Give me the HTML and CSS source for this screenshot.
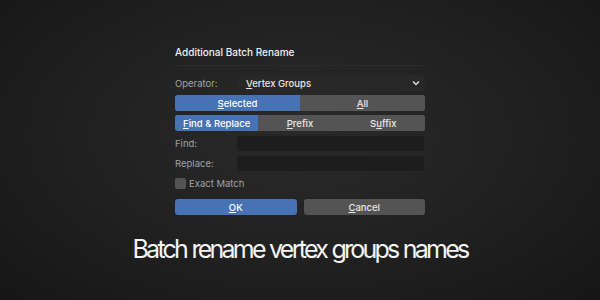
FILE: index.html
```html
<!DOCTYPE html>
<html>
<head>
  <meta charset="utf-8">
  <link rel="stylesheet" href="styles.css">
</head>
<body>
  <div class="page">
    <div class="dialog">
      <div class="title">Additional Batch Rename</div>
      <div class="separator"></div>

      <div class="rows">
        <div class="row">
          <div class="label">Operator:</div>
          <div class="dropdown">
            <span><u>V</u>ertex Groups</span>
            <svg class="chevron" width="8" height="6" viewBox="0 0 8 6">
              <path d="M1 1.5 L4 4.5 L7 1.5" fill="none" stroke="#e0e0e0" stroke-width="1.4"/>
            </svg>
          </div>
        </div>

        <div class="segmented">
          <div class="seg active"><u>S</u>elected</div>
          <div class="seg"><u>A</u>ll</div>
        </div>

        <div class="segmented">
          <div class="seg active"><u>F</u>ind &amp; Replace</div>
          <div class="seg"><u>P</u>refix</div>
          <div class="seg">S<u>u</u>ffix</div>
        </div>

        <div class="row">
          <div class="label">Find:</div>
          <div class="field"></div>
        </div>

        <div class="row">
          <div class="label">Replace:</div>
          <div class="field"></div>
        </div>

        <div class="check-row">
          <div class="checkbox"></div>
          <div class="check-label">Exact Match</div>
        </div>
      </div>

      <div class="actions">
        <div class="btn primary"><u>O</u>K</div>
        <div class="btn"><u>C</u>ancel</div>
      </div>
    </div>

    <div class="caption">Batch rename vertex groups names</div>
  </div>
</body>
</html>
```

FILE: styles.css
```css
:root {
  --blue: #4772b3;
  --button: #545454;
  --field: #1d1d1d;
  --dropdown: #282828;
  --label: #a3a3a3;
  --text: #e8e8e8;
  --font-ui: "Inter", "Noto Sans", sans-serif;
}

html, body {
  margin: 0;
  padding: 0;
}

body {
  width: 600px;
  height: 300px;
  overflow: hidden;
  font-family: var(--font-ui);
  color: var(--text);
  background: radial-gradient(ellipse 70% 80% at 50% 45%, #2a2a2a 0%, #222 45%, #161616 100%);
}

.page {
  display: flex;
  flex-direction: column;
  align-items: center;
}

.dialog {
  width: 250px;
  margin-top: 46px;
}

.title {
  height: 12px;
  line-height: 12px;
  font-size: 10px;
  font-weight: 500;
  color: #f0f0f0;
}

.separator {
  margin-top: 7px;
  height: 1px;
  background: #2c2c2c;
}

.rows {
  margin-top: 9px;
  display: flex;
  flex-direction: column;
  gap: 4px;
}

.row {
  display: flex;
  align-items: center;
  height: 16px;
}

.label {
  width: 61px;
  font-size: 9.5px;
  color: var(--label);
}

.dropdown {
  flex: 1;
  height: 16px;
  display: flex;
  align-items: center;
  justify-content: space-between;
  margin-left: 2px;
  padding: 0 5px 0 8px;
  background: var(--dropdown);
  border-radius: 3px;
  font-size: 9.5px;
  font-weight: 500;
  color: var(--text);
}

.chevron {
  display: block;
}

.field {
  flex: 1;
  height: 15px;
  background: var(--field);
  border: 1px solid #262626;
  border-radius: 3px;
}

.segmented {
  display: flex;
  height: 16px;
  border-radius: 3px;
  overflow: hidden;
  background: var(--button);
}

.seg {
  flex: 1;
  display: flex;
  align-items: center;
  justify-content: center;
  font-size: 9.5px;
  font-weight: 500;
  color: var(--text);
  background: var(--button);
}

.seg.active {
  background: var(--blue);
  color: #fff;
}

.check-row {
  display: flex;
  align-items: center;
  gap: 3px;
  height: 14px;
  margin-top: 1px;
}

.checkbox {
  width: 11px;
  height: 11px;
  border-radius: 2px;
  background: var(--button);
}

.check-label {
  font-size: 9.5px;
  color: var(--label);
}

.actions {
  display: flex;
  gap: 7px;
  margin-top: 9px;
}

.btn {
  flex: 1;
  height: 16px;
  display: flex;
  align-items: center;
  justify-content: center;
  border-radius: 3px;
  font-size: 9.5px;
  font-weight: 500;
  background: var(--button);
  color: var(--text);
}

.btn.primary {
  background: var(--blue);
  color: #fff;
}

u {
  text-underline-offset: 1px;
}

.caption {
  margin-top: 18px;
  font-size: 25px;
  line-height: 32px;
  letter-spacing: -2.75px;
  word-spacing: 1px;
  color: #f4f4f4;
}
```
